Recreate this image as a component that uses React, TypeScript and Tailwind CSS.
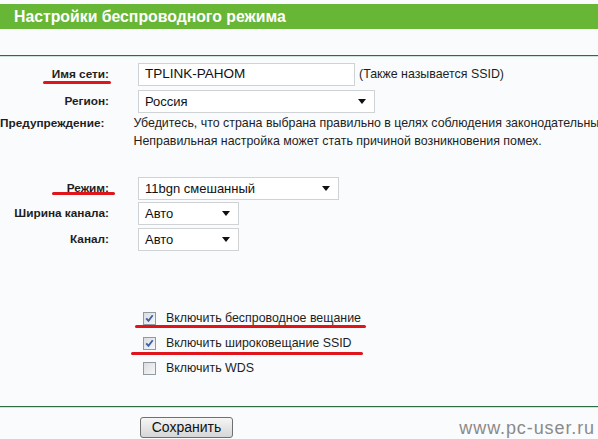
import React from "react";

const Sel = ({ w, text }: { w: string; text: string }) => (
  <div className={`${w} h-[23px] bg-white border border-[#cfd3d6] flex items-center justify-between pl-[6px] pr-[8px] text-[13px] text-[#111]`}>
    <span>{text}</span>
    <svg width="8" height="5" viewBox="0 0 8 5"><path d="M0 0h8L4 5z" fill="#111" /></svg>
  </div>
);

const Check = ({ on }: { on: boolean }) => (
  <svg width="13" height="13" viewBox="0 0 13 13" className="shrink-0">
    <defs>
      <linearGradient id={on ? "g1" : "g0"} x1="0" y1="0" x2="1" y2="1">
        <stop offset="0" stopColor="#d9dcde" />
        <stop offset="1" stopColor="#f8f8f8" />
      </linearGradient>
    </defs>
    <rect x="0.5" y="0.5" width="12" height="12" fill={`url(#${on ? "g1" : "g0"})`} stroke="#8f9aa3" />
    {on && <path d="M3.2 6.3l2.3 2.6 4.2-5.6" fill="none" stroke="#3b5fa8" strokeWidth="1.8" />}
  </svg>
);

export default function App() {
  return (
    <div className="w-[598px] h-[439px] bg-[#fafbfc] overflow-hidden relative" style={{ fontFamily: '"Liberation Sans", Arial, sans-serif' }}>
      <div className="h-[4px]" />
      <div className="h-[25px] bg-[#67b636] flex items-center pl-[14px] text-white font-bold text-[15.8px]">Настройки беспроводного режима</div>
      <div className="h-[26px]" />
      <div className="h-[1px] bg-[#2f6b44]" />
      <div className="h-[1px] bg-[#cfe3d6]" />

      <div className="flex flex-col pt-[6px]">
        <div className="flex items-center h-[23px]">
          <div className="w-[109px] text-right font-bold text-[11.8px] text-[#1e1e1e]">Имя сети:</div>
          <div className="ml-[29px] w-[217px] h-[23px] bg-white border border-[#cfd3d6] flex items-center pl-[6px] text-[13.5px] text-[#111]">TPLINK-PAHOM</div>
          <div className="ml-[4px] text-[12.4px] text-[#1e1e1e]">(Также называется SSID)</div>
        </div>
        <div className="flex items-center h-[23px] mt-[4px]">
          <div className="w-[109px] text-right font-bold text-[11.8px] text-[#1e1e1e]">Регион:</div>
          <div className="ml-[29px]"><Sel w="w-[237px]" text="Россия" /></div>
        </div>
        <div className="flex mt-[1px]">
          <div className="w-[109px] text-right font-bold text-[11.8px] text-[#1e1e1e] leading-[18px]">Предупреждение:</div>
          <div className="ml-[29px] text-[12.4px] text-[#1e1e1e] leading-[18px] whitespace-nowrap">
            Убедитесь, что страна выбрана правильно в целях соблюдения законодательных требований.<br />
            Неправильная настройка может стать причиной возникновения помех.
          </div>
        </div>

        <div className="flex items-center h-[23px] mt-[27px]">
          <div className="w-[109px] text-right font-bold text-[11.8px] text-[#1e1e1e]">Режим:</div>
          <div className="ml-[29px]"><Sel w="w-[201px]" text="11bgn смешанный" /></div>
        </div>
        <div className="flex items-center h-[23px] mt-[2px]">
          <div className="w-[109px] text-right font-bold text-[11.8px] text-[#1e1e1e]">Ширина канала:</div>
          <div className="ml-[29px]"><Sel w="w-[101px]" text="Авто" /></div>
        </div>
        <div className="flex items-center h-[23px] mt-[3px]">
          <div className="w-[109px] text-right font-bold text-[11.8px] text-[#1e1e1e]">Канал:</div>
          <div className="ml-[29px]"><Sel w="w-[101px]" text="Авто" /></div>
        </div>

        <div className="flex flex-col pl-[143px] mt-[61px] gap-[12px] text-[12.4px] text-[#1e1e1e]">
          <div className="flex items-center gap-[10px] h-[13px]"><Check on />Включить беспроводное вещание</div>
          <div className="flex items-center gap-[10px] h-[13px]"><Check on />Включить широковещание SSID</div>
          <div className="flex items-center gap-[10px] h-[13px]"><Check on={false} />Включить WDS</div>
        </div>
      </div>

      <div className="absolute left-0 right-0 top-[406px]">
        <div className="h-[1px] bg-[#2f6b44]" />
        <div className="h-[1px] bg-[#cfe3d6]" />
        <div className="flex items-start justify-between pl-[140px] pr-[3px] pt-[9px]">
          <div className="w-[93px] h-[21px] border border-[#707070] rounded-[3px] bg-gradient-to-b from-[#f6f6f6] to-[#d6d6d6] flex items-center justify-center text-[14px] text-[#111]">Сохранить</div>
          <div className="text-[18px] leading-[20px] tracking-[0.9px] text-[#8a8a8a] mt-[1px]">www.pc-user.ru</div>
        </div>
      </div>

      <div className="absolute left-[43px] top-[81px] w-[68px] h-[3px] bg-[#e0141b] rounded-full" />
      <div className="absolute left-[52px] top-[192px] w-[63px] h-[3px] bg-[#e0141b] rounded-full" />
      <div className="absolute left-[135px] top-[325px] w-[231px] h-[3px] bg-[#e0141b] rounded-full" />
      <div className="absolute left-[131px] top-[352px] w-[232px] h-[3px] bg-[#e0141b] rounded-full" />
    </div>
  );
}
